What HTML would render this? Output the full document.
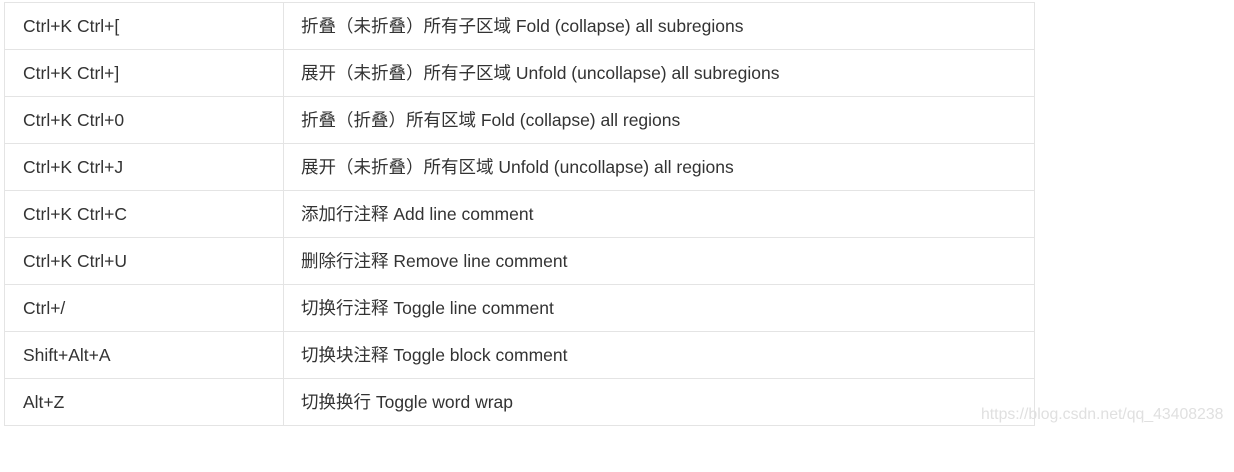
<!DOCTYPE html>
<html><head><meta charset="utf-8"><style>
body{margin:0;background:#fff;width:1234px;height:433px;overflow:hidden;position:relative;font-family:"Liberation Sans","Noto Sans CJK SC",sans-serif;font-size:17.5px;color:#333;}
.row{position:absolute;left:4px;width:1031px;height:47px;border-top:1px solid #e4e4e4;box-sizing:border-box;}
.c{position:absolute;top:0;height:46px;line-height:46px;white-space:nowrap;}
.a{left:19px}.b{left:297px}
.vl{position:absolute;top:2px;width:1px;height:424px;background:#e4e4e4;}
.wm{position:absolute;left:981px;top:406px;color:#e0e0e0;font-size:15.8px;}
</style></head><body>
<div class="vl" style="left:4px"></div><div class="vl" style="left:283px"></div><div class="vl" style="left:1034px"></div>
<div class="row" style="top:2px"><div class="c a">Ctrl+K Ctrl+[</div><div class="c b">折叠（未折叠）所有子区域 Fold (collapse) all subregions</div></div>
<div class="row" style="top:49px"><div class="c a">Ctrl+K Ctrl+]</div><div class="c b">展开（未折叠）所有子区域 Unfold (uncollapse) all subregions</div></div>
<div class="row" style="top:96px"><div class="c a">Ctrl+K Ctrl+0</div><div class="c b">折叠（折叠）所有区域 Fold (collapse) all regions</div></div>
<div class="row" style="top:143px"><div class="c a">Ctrl+K Ctrl+J</div><div class="c b">展开（未折叠）所有区域 Unfold (uncollapse) all regions</div></div>
<div class="row" style="top:190px"><div class="c a">Ctrl+K Ctrl+C</div><div class="c b">添加行注释 Add line comment</div></div>
<div class="row" style="top:237px"><div class="c a">Ctrl+K Ctrl+U</div><div class="c b">删除行注释 Remove line comment</div></div>
<div class="row" style="top:284px"><div class="c a">Ctrl+/</div><div class="c b">切换行注释 Toggle line comment</div></div>
<div class="row" style="top:331px"><div class="c a">Shift+Alt+A</div><div class="c b">切换块注释 Toggle block comment</div></div>
<div class="row" style="top:378px"><div class="c a">Alt+Z</div><div class="c b">切换换行 Toggle word wrap</div></div>
<div class="row" style="top:425px"></div>
<div class="wm">https://blog.csdn.net/qq_43408238</div>
</body></html>
